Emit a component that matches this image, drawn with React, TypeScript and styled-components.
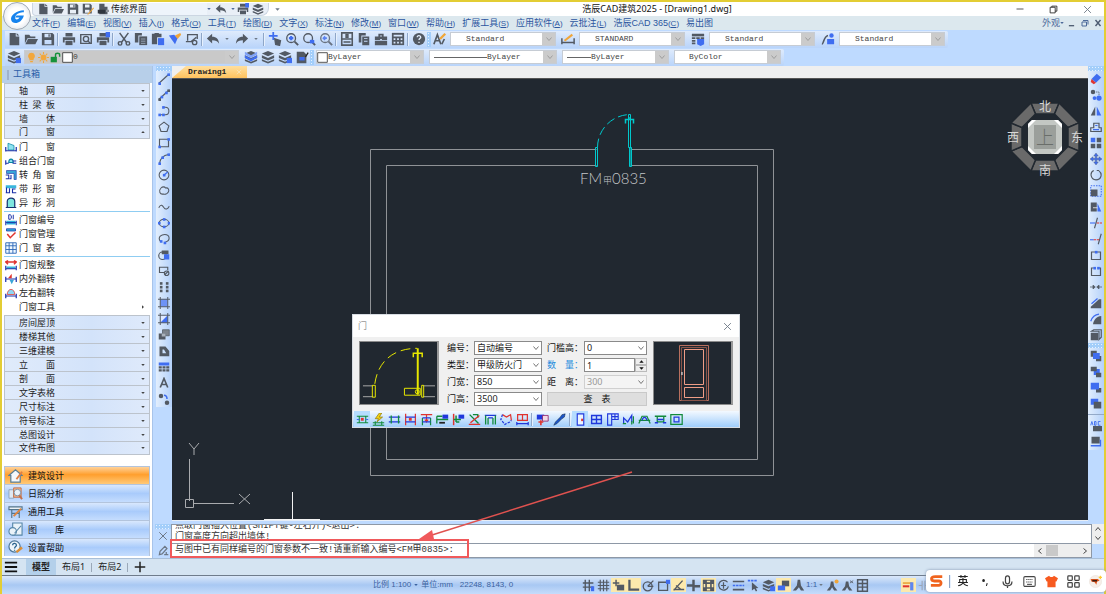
import React from "react";
import styled, { createGlobalStyle, css } from "styled-components";

const DARK = "#525963";
const BLUE = "#3f6df0";
const NAVY = "#1a2fa8";
const CYAN = "#00c8cc";
const GREEN = "#128a3c";
const RED = "#e0342f";
const YEL = "#f0a63a";

const GlobalStyle = createGlobalStyle`
  * { box-sizing: border-box; }
  body { margin: 0; background: #bedaff; }
  body, button, input, select {
    font-family: "Noto Sans", "Noto Sans CJK SC", sans-serif;
    font-size: 9px;
    line-height: 12px;
  }
  button { border: 0; padding: 0; background: none; color: inherit; }
`;

/* ---------- icon set, drawn on a 16 unit grid ---------- */

const layers = (
  <g fill={DARK}>
    <path d="M8 1l7 3-7 3-7-3z" />
    <path d="M1 6l7 3 7-3v3l-7 3-7-3z" />
    <path d="M1 10.500l7 3 7-3v2l-7 3-7-3z" />
  </g>
);
const printer = (
  <g fill={DARK}>
    <path d="M4 1h8v4H4zM1 6h14v6h-2V9H3v3H1z" />
    <path d="M4 10h8v5H4z" />
  </g>
);
const undo = <path d="M7 2v3.500c5 0 7.500 3 8 8-2-3-4-4-8-4V13L1 7.500z" fill={DARK} />;
const magnifier = (
  <g fill="none" stroke={DARK} strokeWidth="1.500">
    <circle cx="7" cy="7" r="5" />
    <path d="M11 11l4 4" strokeWidth="2.200" />
  </g>
);
const tri = (
  <g fill="none" stroke={DARK}>
    <path d="M1 14L14 2" strokeWidth="1.500" />
  </g>
);
const dot = (x: number, y: number, c = BLUE) => <rect x={x - 1.5} y={y - 1.5} width="3.500" height="3.500" fill={c} />;

const icons: Record<string, React.ReactNode> = {
  file: <path d="M3 1h7v4h4v10H3zM11 1l3 3h-3z" fill={DARK} />,
  folder: <path d="M1 3h5l1.500 2H13v2H4l-3 6zM4.500 8H16l-3 6H1.500z" fill={DARK} />,
  save: <path fillRule="evenodd" d="M1 1h12l2 2v12H1zM4 2v4h7V2zM4 9v5h8V9zM8.500 2.500h1.500v3H8.500z" fill={DARK} />,
  saveAs: (
    <g>
      <path fillRule="evenodd" d="M1 1h10l2 2v11H1zM4 2v4h6V2zM4 9v4h6V9z" fill={DARK} />
      <path d="M15 6l-7 8-1 2 2-1 7-8z" fill={YEL} />
    </g>
  ),
  dwg: (
    <g>
      <path d="M3 1h7v4h4v10H3z" fill={DARK} />
      <path d="M1 9h10v5H1z" fill="#30363e" />
      <path d="M12 9h4v3h-4z" fill="#8d9299" />
    </g>
  ),
  printer,
  printBlue: (
    <g>
      {printer}
      <path d="M11 0h5v6h-5z" fill={BLUE} />
    </g>
  ),
  preview: (
    <g fill="none" stroke={DARK} strokeWidth="1.600">
      <path d="M2 3h12v10H2z" />
      <circle cx="8" cy="8" r="3" />
      <path d="M10 10l3 3" />
    </g>
  ),
  cut: (
    <g fill="none" stroke={DARK} strokeWidth="1.700">
      <path d="M3 1l8 11M13 1L5 12" />
      <circle cx="3.500" cy="13" r="2" />
      <circle cx="12.500" cy="13" r="2" />
    </g>
  ),
  copy: (
    <g fill={DARK}>
      <path d="M1 1h8v3H5v8H1z" />
      <path d="M6 5h9v10H6z" />
      <path d="M8 8h5M8 10.500h5M8 13h5" stroke="#cfe0f5" strokeWidth="0.600" />
    </g>
  ),
  paste: (
    <g>
      <path d="M1 2h3V1h5v1h3v4H7v8H1z" fill={DARK} />
      <path d="M8 7h7v8H8z" fill={BLUE} />
    </g>
  ),
  brush: (
    <g>
      <path d="M1 4l6-1 4 4-3 7z" fill={BLUE} />
      <path d="M8 4l6-3 1 2-4 5z" fill={YEL} />
    </g>
  ),
  edit: (
    <g fill="none" stroke={DARK} strokeWidth="1.500">
      <path d="M3 10V3h11v5M1 11h8" />
      <circle cx="11" cy="12" r="2.500" />
      <path d="M7 11l6-5" />
    </g>
  ),
  undo,
  redo: <g transform="translate(16 0) scale(-1 1)">{undo}</g>,
  pan: (
    <g fill="none" stroke={BLUE} strokeWidth="2">
      <path d="M6 0v9M1 4.500h10" />
      <path d="M8 8l6 2-1 5-4-1z" fill={DARK} stroke={DARK} />
    </g>
  ),
  zoomIn: (
    <g>
      {magnifier}
      <path d="M4.500 7h5M7 4.500v5" stroke={BLUE} strokeWidth="2.400" />
    </g>
  ),
  zoomWin: (
    <g>
      {magnifier}
      <path d="M9 9h5v4H9z" fill={BLUE} />
    </g>
  ),
  zoomBack: (
    <g opacity="0.800">
      {magnifier}
      <path d="M9 7H5M7 5L5 7l2 2" stroke={BLUE} fill="none" strokeWidth="1.800" />
    </g>
  ),
  props: (
    <g fill="none" stroke={DARK} strokeWidth="1.800">
      <path d="M2 1h12v14H2zM2 8h12" />
      <path d="M4 11.500h8M7 3h2v3H7z" />
    </g>
  ),
  sheets: <path fillRule="evenodd" d="M2 1h8v3H5v8H2zM6 5h8v10H6zM8 7v1h4V7zM8 10v1h4v-1z" fill={DARK} />,
  toolbox: <path fillRule="evenodd" d="M5 2h6v3h4v4H9V8H7v1H1V5h4zM7 4v1h2V4zM1 10h14v5H1z" fill={DARK} />,
  calc: (
    <g>
      <path d="M1 1h14v14H1z" fill={DARK} />
      <path d="M3 3h10v2H3zM3 7h2v2H3zM7 7h2v2H7zM11 7h2v2h-2zM3 11h2v2H3zM7 11h2v2H7zM11 11h2v2h-2z" fill="#d6e5fa" />
    </g>
  ),
  help: (
    <g>
      <circle cx="8" cy="8" r="7" fill={DARK} />
      <path d="M6 6c0-3 4-2 4 0 0 1.500-2 1-2 3M8 11v1.500" stroke="#e3edfb" fill="none" strokeWidth="1.500" />
    </g>
  ),
  textStyle: (
    <g fill="none" strokeWidth="1.900">
      <path d="M1 14L5 3l4 11M3 10h5" stroke={DARK} />
      <path d="M10 14l3-6" stroke={DARK} />
      <path d="M8 8l6-6" stroke={YEL} strokeWidth="2.600" />
    </g>
  ),
  dimStyle: (
    <g fill="none" strokeWidth="1.700">
      <path d="M1 7v7M15 7v7M1 12h14" stroke={DARK} />
      <path d="M4 10l9-7" stroke={YEL} strokeWidth="2.400" />
    </g>
  ),
  tableStyle: (
    <g>
      <path d="M1 2h14v3H1z" fill={DARK} />
      <path d="M1 6h4v2H1zM6 6h4v2H6zM11 6h4v2h-4zM1 9h4v2H1zM1 12h4v2H1z" fill={DARK} />
      <path d="M7 8h8v6l-4 2-4-2z" fill={BLUE} />
    </g>
  ),
  leaderStyle: (
    <g>
      <path d="M1 14C3 14 3 5 8 4" stroke={DARK} strokeWidth="1.800" fill="none" />
      <circle cx="12" cy="4" r="2.500" fill={BLUE} />
      <path d="M7 8h8v6H7z" fill={BLUE} />
    </g>
  ),
  layers,
  layersBlue: (
    <g>
      {layers}
      <path d="M10 9h6v6h-6z" fill={BLUE} />
    </g>
  ),
  layersTop: (
    <g>
      {layers}
      <path d="M1 2l7 4 7-4v3l-7 4-7-4z" fill="#7fa2f8" />
      <path d="M1 6l7 4 7-4v3l-7 4-7-4z" fill={BLUE} />
    </g>
  ),
  layerPage: (
    <g>
      <path d="M2 2h8l3 3v10H2z" fill={DARK} />
      <path d="M5 8h6v4H5z" fill={BLUE} />
      <path d="M12 8l3-5" stroke="#222" strokeWidth="1.500" />
    </g>
  ),
  bulb: <path d="M8 1a5 5 0 0 1 3 9v2H5v-2a5 5 0 0 1 3-9zM6 13h4v2H6z" fill="#f2a73c" />,
  sun: (
    <g stroke="#f2a73c" strokeWidth="1.500">
      <circle cx="8" cy="8" r="3.500" fill="#f2a73c" />
      <path d="M8 0v3M8 13v3M0 8h3M13 8h3M2.500 2.500l2 2M11.500 11.500l2 2M13.500 2.500l-2 2M4.500 11.500l-2 2" />
    </g>
  ),
  lock: (
    <g>
      <path d="M1 7h9v8H1z" fill="#17923a" />
      <path d="M8 8V4c0-3 6-3 6 0v3" fill="none" stroke="#17923a" strokeWidth="2" />
    </g>
  ),
  swatch: <path d="M1 1h14v14H1z" fill="#fff" stroke="#333" strokeWidth="1.200" />,

  line: <g>{tri}{dot(2, 14)}{dot(14, 2)}</g>,
  xline: <g>{tri}{dot(2, 14, DARK)}{dot(14, 2, DARK)}{dot(5, 10.5)}{dot(11, 5)}</g>,
  pline: (
    <g>
      <path d="M2 13h8M7 3h3c6 0 6 10 0 10" fill="none" stroke={DARK} strokeWidth="1.400" />
      {dot(2, 13)}{dot(7, 13)}{dot(7, 3)}
    </g>
  ),
  polygon: <path d="M8 1.500l6.500 5L12 14H4L1.500 6.500z" fill="none" stroke={DARK} strokeWidth="1.500" />,
  rect: <g><path d="M2 3h12v10H2z" fill="none" stroke={DARK} strokeWidth="1.500" />{dot(14, 3)}{dot(2, 13)}</g>,
  arc: <g><path d="M2 14C3 7 7 3 14 2" fill="none" stroke={DARK} strokeWidth="1.400" />{dot(2, 14)}{dot(6, 6)}{dot(14, 2)}</g>,
  circle: <g><circle cx="8" cy="8" r="6.500" fill="none" stroke={DARK} strokeWidth="1.400" /><path d="M8 8l5-4" stroke={BLUE} strokeWidth="1.500" />{dot(8, 8)}</g>,
  cloud: <path d="M4 4c2-2 5-2 6 0 4-1 5 3 4 5s-4 4-7 3c-4 1-7-4-3-8z" fill="none" stroke={DARK} strokeWidth="1.400" />,
  spline: <path d="M1 9c3-6 5-3 7 0s5 2 7-2" fill="none" stroke={DARK} strokeWidth="1.400" />,
  ellipse: <g><ellipse cx="8" cy="8" rx="6.500" ry="5" fill="none" stroke={DARK} strokeWidth="1.400" />{dot(8, 3)}{dot(8, 13)}{dot(1.500, 8)}{dot(14.500, 8)}</g>,
  ellArc: <g><path d="M3 11C-1 5 5 2 9 2c7 0 8 8 1 10" fill="none" stroke={DARK} strokeWidth="1.400" />{dot(4, 11)}{dot(9, 13)}</g>,
  block: <g><circle cx="6" cy="9" r="5" fill="none" stroke={DARK} strokeWidth="1.500" /><path d="M5 2h9v5H5z" fill={DARK} /><path d="M8 7h7v7H8z" fill={BLUE} /></g>,
  mkblock: <g fill="none" stroke={DARK} strokeWidth="1.500"><path d="M8 10H2V3h11v4" /><circle cx="11.500" cy="11" r="3" /><path d="M9 13l5-5" /></g>,
  points: <g>{dot(4, 3, DARK)}{dot(4, 8, DARK)}{dot(4, 13, DARK)}{dot(12, 3, DARK)}{dot(12, 8, DARK)}{dot(12, 13, DARK)}</g>,
  hatch: <g><path d="M3 3h10v10H3z" fill="#6d92f5" /><path d="M3 0v16M13 0v16M0 3h16M0 13h16" stroke={DARK} strokeWidth="1.300" /></g>,
  gradient: <g><path d="M3 13V3h10z" fill="#dfe9ff" /><path d="M3 13L13 3v10z" fill={BLUE} /><path d="M3 0v16M13 0v16M0 3h16M0 13h16" stroke={DARK} strokeWidth="1.300" /></g>,
  boundary: <g><path d="M6 1h9v8H6z" fill="#7d848d" stroke={DARK} /><path d="M1 6h9v8H1z" fill={DARK} /><path d="M5 6h5v4H5z" fill="#aab2bc" /></g>,
  region: <path fillRule="evenodd" d="M2 2h8l5 6v7H2zM6 6v5h5L8 6z" fill={DARK} />,
  table: <g><path d="M1 2h14v4H1z" fill={BLUE} /><path d="M1 7h4v3H1zM6 7h4v3H6zM11 7h4v3h-4zM1 11h4v3H1zM6 11h4v3H6zM11 11h4v3h-4z" fill={DARK} /></g>,
  text: <path d="M3 14L8 2l5 12M5 10h6" fill="none" stroke={DARK} strokeWidth="2.200" />,
  match: <g><circle cx="4" cy="4" r="3" fill={DARK} /><circle cx="12" cy="13" r="3" fill={DARK} /><path d="M8 3c3 0 4 2 4 5" fill="none" stroke={BLUE} strokeWidth="2" /></g>,

  eraser: <g><path d="M9 1l6 5-7 7-6-5z" fill={BLUE} /><path d="M2 8l6 5-3 2-4-3z" fill={RED} /></g>,
  copyObj: <g><circle cx="4" cy="4" r="3" fill={DARK} /><path d="M8 4h4v4" fill="none" stroke={DARK} strokeDasharray="2 1" /><circle cx="6" cy="12" r="2.500" fill={BLUE} /><circle cx="12" cy="12" r="3.500" fill={BLUE} /></g>,
  mirror: <g><path d="M7 2v12H1z" fill={DARK} /><path d="M9 2v12h6z" fill={BLUE} /></g>,
  offset: <g fill="none" strokeWidth="1.600"><path d="M1 14h14V9h-3V3H5v6H1z" stroke={DARK} /><path d="M4 11.500h8M7 6h3" stroke={BLUE} /></g>,
  array: <g><path d="M1 1h6v6H1z" fill={BLUE} /><path d="M9 1h6v6H9zM1 9h6v6H1zM9 9h6v6H9z" fill={DARK} /></g>,
  move: <path d="M8 0l3 4H9v3h3V5l4 3-4 3V9H9v3h2l-3 4-3-4h2V9H4v2L0 8l4-3v2h3V4H5z" fill={BLUE} stroke={DARK} strokeWidth="0.500" />,
  rotate: <path d="M5 2C-1 5 1 14 8 14.500c7 0 9-8 4-12M12 2h-3" fill="none" stroke={DARK} strokeWidth="1.500" />,
  scale: <g><path d="M1 1h14v14H1z" fill="none" stroke={BLUE} strokeDasharray="2 1.500" strokeWidth="1.400" /><path d="M1 6h9v9H1z" fill={DARK} /></g>,
  stretch: <g><path d="M1 2h8v12H1z" fill={DARK} /><path d="M10 3l5 11h-5z" fill={BLUE} /><path d="M4 9h6" stroke="#fff" /></g>,
  trim: <g strokeWidth="1.500"><path d="M10 1L6 15" stroke={DARK} /><path d="M0 8h7" stroke={BLUE} /><path d="M9 8h7" stroke={RED} strokeDasharray="3 1" /></g>,
  extend: <g strokeWidth="1.500"><path d="M15 1l-4 14" stroke={DARK} /><path d="M0 9h5" stroke={BLUE} /><path d="M5 9h7" stroke={RED} strokeDasharray="3 1" /></g>,
  breakPt: <g><path d="M2 4h12v10H2z" fill="none" stroke={DARK} strokeWidth="1.600" />{dot(8, 4)}</g>,
  breakTwo: <g><path d="M5 4H2v10h12V4h-3" fill="none" stroke={DARK} strokeWidth="1.600" />{dot(6, 4)}{dot(11, 4)}</g>,
  join: <path d="M0 8h5M16 8h-5M4 5.500L7 8l-3 2.500zM12 5.500L9 8l3 2.500z" fill={DARK} stroke={DARK} />,
  chamfer: <g><path d="M15 3v12H1v-2L12 3z" fill={DARK} /><path d="M2 9l8-7" stroke={BLUE} strokeWidth="1.700" /></g>,
  fillet: <g><path d="M15 4c-6 0-10 5-11 11h11z" fill={DARK} /><path d="M1 11C3 5 7 2 12 1.500" stroke={BLUE} strokeWidth="1.700" fill="none" /></g>,
  explode: <g><path d="M1 5h10v10H1z" fill={DARK} /><path d="M2 3l3-2h10v10l-3 3V3z" fill="none" stroke={DARK} strokeWidth="1.600" /></g>,
  front: <g><path d="M1 1h8v8H1zM8 8h7v7H8z" fill={DARK} /><path d="M4 4h9v8H4z" fill={BLUE} /></g>,
  back: <g><path d="M5 4h8v8H5z" fill={BLUE} /><path d="M1 1h8v6H1zM8 9h7v6H8z" fill={DARK} /></g>,
  above: <g><path d="M8 8h7v6H8z" fill={DARK} /><path d="M1 1h11v9H1z" fill={BLUE} /></g>,
  under: <g><path d="M1 1h10v8H1z" fill={BLUE} /><path d="M5 5h10v9H5z" fill={DARK} /></g>,
  abc: <g><path d="M4 8h12v7H4z" fill={DARK} /><path d="M1 7l1.500-5L4 7M6 2v5h2V2zM14 2h-3v5h3" fill="none" stroke={BLUE} strokeWidth="1.200" /></g>,
  dimFront: <g><path d="M2 1h11v9H2z" fill={DARK} /><path d="M1 13h13M14 5v9" stroke={BLUE} strokeWidth="1.800" fill="none" /></g>,

  pWindow: <g><path d="M4 12V3l8 3v6z" fill="#8fe3f0" stroke="#0a86a6" /><path d="M1 8v6M15 8v6M1 13h14" stroke={NAVY} strokeWidth="1.600" /></g>,
  pCombo: <g fill="none" strokeWidth="1.500"><path d="M5 10c0-6 6-6 6 0z" stroke="#0a86a6" fill="#8fe3f0" /><path d="M1 7v6M1 11h4M10 8h5M10 11h5" stroke={NAVY} /></g>,
  pCorner: <g><path d="M2 2h13v12h-3V6H2z" fill="#39a5d8" stroke={NAVY} strokeWidth="0.800" /><path d="M1 8h4v5H1M8 8v5H6" fill="none" stroke={NAVY} strokeWidth="1.400" /></g>,
  pStrip: <g><path d="M1 3h14v4H1z" fill="#39b6dc" /><path d="M2 6v7M6 7v6H1M14 8h-4v5h5" fill="none" stroke={NAVY} strokeWidth="1.500" /></g>,
  pShape: <path d="M3 14V6c0-6 10-6 10 0v8zM1 14h14" fill="#7fe6df" stroke="#14306e" strokeWidth="1.600" />,
  pNumber: <g><path d="M2 9h12v5H2z" fill="#2fb2dd" /><path d="M5 1v6h2c2 0 2-6 0-6zM11 1v6M1 9v6M15 9v6M1 11.500h14" stroke={NAVY} fill="none" strokeWidth="1.300" /></g>,
  pManage: <g><path d="M2 1h12v3H2z" fill="#2fb2dd" stroke={NAVY} /><path d="M3 8l4 5 7-7" fill="none" stroke={RED} strokeWidth="2" /></g>,
  pTable: <path d="M1 1h14v14H1zM1 5h14M1 10h14M5.500 1v14M10.500 1v14" fill="#eef8ff" stroke="#2b66b8" strokeWidth="1.200" />,
  pAlign: <g><path d="M2 4h12M4 2L1 4l3 3M12 2l3 2-3 3" stroke={RED} fill="none" strokeWidth="2" /><path d="M2 10h12v3H2z" fill="#39b6dc" /><path d="M1 9v6M15 9v6M1 13h14" stroke={NAVY} strokeWidth="1.500" /></g>,
  pFlipIn: <g><path d="M1 5v7M15 5v7M1 8h14" stroke={NAVY} strokeWidth="1.600" /><path d="M4 7l5-6v6z" fill={RED} /><path d="M6 9h6l-3 6z" fill="#39a5d8" /></g>,
  pFlipLr: <g><path d="M3 10c0-9 10-9 10 0z" fill="#8fd6f2" stroke={RED} /><path d="M1 9v6M15 9v6M1 12h14" stroke={NAVY} strokeWidth="1.600" /></g>,

  bHouse: <g><path d="M1 8l7-6 7 6h-2v7H3V8z" fill="#f4f8fb" stroke="#5b7f96" strokeWidth="1.300" /><path d="M9 12l6-8" stroke="#e07f43" strokeWidth="2" /></g>,
  bSun: <g><path d="M1 4h5v9H1z" fill="#dfe8f2" stroke="#8fa5bd" /><path d="M6 2h8v10H6z" fill="#f2b48c" stroke="#c2714a" /><circle cx="10" cy="7" r="3.500" fill="#e8f1f8" stroke="#7791a8" /><path d="M12 10l3 4" stroke="#c2714a" strokeWidth="2" /></g>,
  bTools: <g><path d="M1 3h14v3H1zM4 6v9M12 6v9M4 10h8" fill="#eaf1f6" stroke="#54758c" strokeWidth="1.200" /><path d="M6 13l8-8" stroke="#e0853f" strokeWidth="2" /></g>,
  bLib: <g fill="#eaf3f9" stroke="#5686a8" strokeWidth="1.200"><path d="M5 1h10v13H5z" /><circle cx="5" cy="10" r="4" /><path d="M7 12l7-8" /></g>,
  bHelp: <g><circle cx="7" cy="7" r="6" fill="#edf5fb" stroke="#4e7797" strokeWidth="1.300" /><path d="M5 5.500c0-3 4-2 4 0C9 7 7 7 7 9M7 10.500v1" stroke="#28628e" fill="none" strokeWidth="1.400" /><path d="M9 13l6-5" stroke="#dd8f35" strokeWidth="2.600" /></g>,

  dCenter: <g strokeWidth="1.300" fill="none"><path d="M1 4h14M1 12h14M4 4v8M12 4v8" stroke={GREEN} /><path d="M1 8h3M12 8h3" stroke={BLUE} />{dot(7.5, 7.5, RED)}</g>,
  dFlash: <g><path d="M9 0L4 7h4l-2 4 7-6H9l3-5z" fill="#f5d211" stroke="#857000" strokeWidth="0.800" /><path d="M1 12h14M1 15h14M4 10v5M12 10v5" stroke={GREEN} strokeWidth="1.300" /></g>,
  dWall: <g fill="none" strokeWidth="1.600"><path d="M1 5h14M1 11h14" stroke="#2038dc" /><path d="M4 3v10M13 3v10" stroke={GREEN} /></g>,
  dLimit: <g fill="none" strokeWidth="1.500"><path d="M2 1v14M14 1v14" stroke={RED} /><path d="M2 5h12M2 11h12" stroke="#2038dc" />{dot(7.5, 7.5, RED)}</g>,
  dTop: <g fill="none" strokeWidth="1.500"><path d="M1 2h14M8 2v9M6 8l2 3 2-3" stroke={RED} /><path d="M3 6v9M13 6v9" stroke={GREEN} /><path d="M3 6h10M3 11h10" stroke="#2038dc" /></g>,
  dAxis: <g fill="none" strokeWidth="1.600"><path d="M1 4h7M1 4v9M1 8h14" stroke={GREEN} /><path d="M8 2h7v5H8z" fill="#2038dc" stroke="none" /><path d="M4 12h7" stroke="#222" strokeWidth="2.200" /></g>,
  dPad: <g fill="none" strokeWidth="1.800"><path d="M2 1v14" stroke={RED} /><path d="M2 8h9M5 3v8M5 11h4" stroke={GREEN} /><path d="M8 2h7v5H8z" fill="#2038dc" /></g>,
  dAngle: <g fill="none" strokeWidth="1.700"><path d="M2 2l11 11M6 2h6v4" stroke={GREEN} /><path d="M1 14h14M3 12L14 3" stroke={RED} /></g>,
  dDoor: <g fill="none" strokeWidth="1.600"><path d="M1 3h14M5 6h6" stroke="#2038dc" /><path d="M2 3v11M14 3v11M5 6v8M11 6v8" stroke={GREEN} /></g>,
  dPoly: <g fill="none" strokeWidth="1.500"><path d="M3 2l5 3 5-3 1 7" stroke={RED} /><path d="M3 2L1 8l5 6 6-3 2-2" stroke="#2038dc" strokeDasharray="3 1.500" /></g>,
  dPair: <g fill="none" strokeWidth="1.500"><path d="M2 2h12v7H2zM8 2v7" stroke={RED} /><path d="M1 13h14M1 11v4M15 11v4" stroke="#2038dc" /></g>,
  dReplace: <g><path d="M1 2h9v6H1z" fill="#2038dc" /><path d="M8 3h7v7H8z" fill="#f2d8e6" stroke="#8c1e66" /><path d="M3 11h6M6 9v6" stroke={RED} strokeWidth="2" /></g>,
  dPick: <path d="M1 15l2-4 6-6 2-3 4-1-1 4-3 2-6 6z" fill="#1c55c8" stroke="#123" strokeWidth="0.600" />,
  dLeaf: <g fill="none" strokeWidth="1.400"><path d="M4 1h8v14H4z" stroke="#2038dc" fill="#eaf4ff" /><path d="M10 7v3" stroke={RED} strokeWidth="2.400" /></g>,
  dWin: <path d="M2 3h12v10H2zM8 3v10M2 8h12" fill="none" stroke="#2038dc" strokeWidth="1.700" />,
  dDoorWin: <path d="M2 1h5v14H2zM7 1h8v7H7zM11 1v7M7 4.500h8" fill="none" stroke="#2038dc" strokeWidth="1.400" />,
  dFold: <g fill="none" strokeWidth="1.500"><path d="M2 13V6l5 5 5-8v8" stroke="#2038dc" /><path d="M1 13h4M12 10v4M14 4v9" stroke={GREEN} /></g>,
  dArch: <g fill="none" strokeWidth="1.500"><path d="M1 13l4-9h6l4 9M1 9h14" stroke={GREEN} /><path d="M5 9c1-5 5-5 6 0" stroke="#2038dc" /></g>,
  dBay: <g fill="none" strokeWidth="1.600"><path d="M1 4h14M4 4v7h8V4" stroke={GREEN} /><path d="M4 8h8M1 12h4M11 12h4" stroke="#2038dc" /></g>,
  dHole: <g fill="none" strokeWidth="1.500"><path d="M1 2h14v12H1z" stroke={GREEN} /><path d="M5 5h6v6H5z" stroke="#2038dc" /></g>,

  snap: <g><path d="M4 1v14M9 1v14M1 5h13M1 10h13" stroke={DARK} strokeWidth="1.700" /><path d="M11 9h4v6h-4z" fill={BLUE} /></g>,
  grid: <path d="M4 1v14M8 1v14M12 1v14M1 4h14M1 8h14M1 12h14" stroke={DARK} strokeWidth="1.400" />,
  dynIn: <g><path d="M1 5h8M5 1v8" stroke={DARK} strokeWidth="1.800" /><path d="M6 7h9v7H6z" fill={DARK} /></g>,
  ortho: <path d="M3 1v12h12" fill="none" stroke={DARK} strokeWidth="2.800" />,
  polar: <g fill="none" stroke={DARK} strokeWidth="1.600"><circle cx="7" cy="9" r="5.500" /><path d="M7 9l7-7M7 9h7" /></g>,
  osnap: <g><path d="M2 4h11v10H2z" fill="none" stroke={DARK} strokeWidth="1.600" /><path d="M11 1h5v5h-5z" fill={BLUE} /></g>,
  track: <path d="M2 14L13 2M2 13h13M5 8l6 5" fill="none" stroke={DARK} strokeWidth="1.700" />,
  lwt: <path d="M0 8h8M8 1v14M8 9h8" fill="none" stroke={DARK} strokeWidth="3" />,
  dynUcs: <path fillRule="evenodd" d="M1 1h14v14H1zM6 2v2h4V2zM2 6v4h2V6zM12 6v4h2V6zM6 12v2h4v-2zM6 6v4h4V6z" fill={DARK} />,
  cycle: <path d="M13 4A6 6 0 1 0 14 9M8 4v8M5 8h6" fill="none" stroke={DARK} strokeWidth="1.500" />,
  lines: <g strokeWidth="2"><path d="M1 3h14M1 13h14" stroke={DARK} /><path d="M1 8h14" stroke={BLUE} strokeDasharray="3 1" /></g>,
  cursor: <g><path d="M1 2h12" stroke={BLUE} strokeDasharray="3 1" strokeWidth="2" /><path d="M6 4l8 7-3 .5 1.500 3-1.500 1-2-3.500-3 2z" fill={DARK} /></g>,
  screens: <g><path d="M6 2h9v7H6z" fill={DARK} /><path d="M1 8h9v6H1z" fill={BLUE} /></g>,
  anno: <path d="M7 1h3l1 7 4 6h-4l-2.500-4L5 14H1l5-6z" fill={DARK} />,
  annoDot: <g><path d="M6 3h3l1 6 4 5h-4l-2.500-4L5 14H1l4-5z" fill={DARK} /><circle cx="13" cy="3" r="2.500" fill={YEL} /></g>,
  annoX: <g><path d="M6 3h3l1 6 4 5h-4l-2.500-4L5 14H1l4-5z" fill={DARK} /><path d="M11 2l4 3M15 2l-4 3" stroke={DARK} /></g>,
  cabinet: <path d="M2 1h12v14H2zM8 1v14M2 5.500h12M2 10h12" fill="none" stroke={DARK} strokeWidth="1.800" />,
  tray: <g><path d="M1 5h11" stroke="#e7a53a" strokeWidth="2" /><path d="M1 9h8" stroke={RED} strokeWidth="2.500" /><path d="M10 4h4v10h-4z" fill="#5e86ee" /></g>,
  isolate: <path d="M6 1v14M10 1v14M1 8h5M10 8h5" stroke="#9aa5b5" strokeWidth="1.600" />,

  min: <path d="M1 8h14" stroke="#222" strokeWidth="1.500" />,
  max: <path d="M2 4h9v10H2zM5 4V2h9v9h-3" fill="none" stroke="#222" strokeWidth="1.500" />,
  close: <path d="M2 2l12 12M14 2L2 14" stroke="currentColor" strokeWidth="1.600" />,
  closeBold: <path d="M3 2l10 12M13 2L3 14" stroke="#4d5b70" strokeWidth="2.800" />,
  minBar: <path d="M2 13h12" stroke="#4d5b70" strokeWidth="3" />,
  restore: <path d="M2 6h9v8H2zM4 3h10v8" fill="none" stroke="#4d6a9a" strokeWidth="2" />,
  pencil: <path d="M2 14l1-5 7-7 3 3-7 8zM9 14h6M12 10v5" fill="none" stroke="#6d7886" strokeWidth="1.800" />,
  plus: <path d="M8 1v14M1 8h14" stroke="#222" strokeWidth="2" />,
  burger: <path d="M1 3h14M1 8h14M1 13h14" stroke="#111" strokeWidth="2.200" />,
  chevron: <path d="M3 5l5 6 5-6" fill="none" stroke="currentColor" strokeWidth="1.800" />,
  caret: <path d="M1 4h14l-7 8z" fill="currentColor" />,
  logo: <path d="M14 2C7 2 1 7 2 11c1 5 10 4 12-4H7l-1 2h4c-2 3-5 2-4-1s5-4 8-4z" fill="#1683ee" />,
  sogou: <path d="M14 3H6C0 3 1 8 5 8h5c4 0 3 5 0 5H1" fill="none" stroke="#f0641e" strokeWidth="3.200" />,
  mic: <g fill="none" stroke="#444" strokeWidth="1.500"><path d="M5.500 4c0-4 5-4 5 0v4c0 4-5 4-5 0z" /><path d="M2.500 8c0 7 11 7 11 0M8 13v3" /></g>,
  keyboard: <g fill="none" stroke="#444" strokeWidth="1.300"><rect x="1" y="2" width="14" height="12" rx="1.500" /><path d="M4 5.500h8M4 8.500h8" strokeDasharray="1.500 1" /><path d="M5 11.500h6" /></g>,
  shirt: <path d="M5 1c1 2 5 2 6 0l5 3-2 4h-1v7H3V8H2L0 4z" fill="#f75a20" />,
  apps: <g fill="none" stroke="#444" strokeWidth="1.500"><rect x="1" y="1" width="5.500" height="5.500" rx="1" /><rect x="9.500" y="1" width="5.500" height="5.500" rx="1" /><rect x="1" y="9.500" width="5.500" height="5.500" rx="1" /><rect x="9.500" y="9.500" width="5.500" height="5.500" rx="1" /></g>,
  fox: <g><circle cx="8" cy="8" r="7.500" fill="#f7efe9" stroke="#e6dcd4" strokeWidth="0.600" /><path d="M2 5l9 0 2 2-3 1-1 4-2-3-4-1z" fill="#e2561c" /><path d="M4 6h6v2H4z" fill="#3b1d14" /><path d="M14 1v4M12 3h4" stroke="#ffcc33" strokeWidth="1.500" /></g>,
};

const Icon = ({ name, size = 14 }: { name: string; size?: number }) => (
  <svg width={size} height={size} viewBox="0 0 16 16" aria-hidden="true" style={{ flexShrink: 0, display: "block" }}>
    {icons[name]}
  </svg>
);

/* ---------- shared parts ---------- */

const center = css`
  display: flex;
  align-items: center;
  justify-content: center;
`;

const ToolButton = styled.button<{ $w?: number; $h?: number; $on?: boolean }>`
  ${center}
  flex: none;
  width: ${(p) => p.$w ?? 17}px;
  height: ${(p) => p.$h ?? 16}px;
  color: #6d7886;
  background: ${(p) => (p.$on ? "#fce9ad" : "none")};
`;
const Divider = styled.span<{ $h?: number }>`
  flex: none;
  width: 2px;
  height: ${(p) => p.$h ?? 13}px;
  margin: 0 1px;
  border-left: 1px solid #8ea6c8;
  border-right: 1px solid #e6f0fd;
`;
const Grip = styled.span<{ $wide?: boolean }>`
  flex: none;
  width: ${(p) => (p.$wide ? "100%" : "4px")};
  height: ${(p) => (p.$wide ? 5 : 15)}px;
  background: radial-gradient(circle, #e8f3ff 1px, transparent 1px) 0 0 / 3px 3px #a3cefa;
`;

/* ---------- window frame ---------- */

const Window = styled.div`
  min-height: 100vh;
  display: flex;
  flex-direction: column;
  border: solid #e3cd34;
  border-width: 2px 2px 0;
  background: #bedaff;
`;
const Header = styled.header`
  display: grid;
  grid-template-columns: 30px 1fr;
  background: linear-gradient(#fff 14px, #dce8ee 14px);
  height: 28px;
`;
const LogoButton = styled.button`
  ${center}
  grid-row: 1 / 3;
  align-self: center;
  justify-self: center;
  width: 28px;
  height: 28px;
  border-radius: 50%;
  border: 1px solid #9fa8b3;
  background: radial-gradient(circle, #fff 45%, #d3d9e2);
`;
const TitleRow = styled.div`
  display: flex;
  align-items: center;
  height: 14px;
`;
const QuickBar = styled.div`
  display: flex;
  align-items: center;
  height: 13px;
  color: #4d6a9a;
`;
const QuickPill = styled.div`
  display: flex;
  align-items: center;
  height: 13px;
  padding-left: 2px;
  padding-right: 3px;
  border-radius: 0 0 8px 4px;
  border: 1px solid #ccd6e2;
  border-top: 0;
  background: #e9eff7;
`;
const Workspace = styled.select`
  width: 97px;
  height: 12px;
  appearance: none;
  border: 0;
  padding: 0 1px;
  line-height: 11px;
  color: #222;
  background: #eef4fb;
`;
const Title = styled.h1`
  flex: 1;
  margin: 0;
  padding-left: 18px;
  font-size: 9px;
  line-height: 12px;
  font-weight: 400;
  text-align: center;
  color: #111;
`;
const WindowControls = styled.div`
  display: flex;
  gap: 17px;
  padding-right: 8px;
  color: #222;
`;
const MenuRow = styled.nav`
  display: flex;
  align-items: center;
  height: 14px;
  color: #2c56a0;
`;
const MenuItem = styled.button`
  padding-right: 7px;
  font-family: "Liberation Sans", "Noto Sans CJK SC", sans-serif;
  white-space: nowrap;
`;
const AccessKey = styled.span`
  font-size: 8px;
  u { text-underline-offset: 1px; }
`;
const MenuRight = styled.div`
  display: flex;
  align-items: center;
  margin-left: auto;
  color: #4d6a9a;
`;

const ToolRow = styled.div`
  display: flex;
  align-items: center;
  height: 18px;
  padding-left: 3px;
  background: #bedaff;
`;
const ToolGroup = styled.div`
  display: flex;
  align-items: center;
  height: 17px;
  border-radius: 0 2px 2px 0;
  background: linear-gradient(#dfebfc, #b9d4fa);
`;

const ComboWrap = styled.label<{ $w: number; $muted?: boolean }>`
  display: flex;
  align-items: center;
  flex: none;
  width: ${(p) => p.$w}px;
  height: 14px;
  margin: 0 3px 0 2px;
  border: 1px solid #c6ccd4;
  color: #8b8b8b;
  background: ${(p) => (p.$muted ? "#c9c9c9" : "#fff")};
`;
const ComboSelect = styled.select`
  flex: 1;
  min-width: 0;
  height: 12px;
  appearance: none;
  border: 0;
  padding: 0;
  background: none;
  font-family: "Liberation Mono", monospace;
  font-size: 8px;
  line-height: 12px;
  color: #444;
`;
const ComboArrow = styled.span`
  ${center}
  width: 13px;
  height: 12px;
  color: #999;
  background: #cbcbcb;
`;
const ComboRule = styled.span<{ $w: number }>`
  width: ${(p) => p.$w}px;
  height: 1px;
  margin-left: 4px;
  background: #666;
`;
const ComboPad = styled.span<{ $w: number }>`
  width: ${(p) => p.$w}px;
`;

const Combo = ({ label, value, w, lead, muted }: { label: string; value: string; w: number; lead?: React.ReactNode; muted?: boolean }) => (
  <ComboWrap $w={w} $muted={muted}>
    {lead}
    <ComboSelect aria-label={label} defaultValue={value}>
      <option>{value}</option>
    </ComboSelect>
    <ComboArrow>
      <Icon name="chevron" size={8} />
    </ComboArrow>
  </ComboWrap>
);

/* ---------- body ---------- */

const Body = styled.div`
  flex: 1;
  display: flex;
`;
const Palette = styled.aside`
  flex: none;
  display: flex;
  flex-direction: column;
  width: 151px;
  padding-left: 2px;
  background: #fff;
  border-right: 1px solid #a8c4ea;
`;
const PaletteHead = styled.h2`
  margin: 0 0 0 -2px;
  padding-left: 5px;
  height: 17px;
  font-size: 9px;
  line-height: 16px;
  font-weight: 400;
  color: #2c5ea8;
  background: #b7cfe9;
  &::before {
    content: "";
    display: inline-block;
    width: 2px;
    height: 10px;
    margin-right: 4px;
    vertical-align: middle;
    background: #9fb2cc;
  }
`;
const Category = styled.button`
  display: flex;
  align-items: center;
  width: 146px;
  height: 14px;
  padding: 0 4px 0 14px;
  border: 1px solid #bcc3cc;
  border-bottom: 0;
  color: #1d1d1d;
  background: linear-gradient(90deg, #e0ebfb, #d3e3fa 60%, #dfeafb);
  &:last-child { border-bottom: 1px solid #bcc3cc; }
`;
const Caption = styled.span`
  width: 36px;
  white-space: nowrap;
  text-align-last: justify;
`;
const CategoryMark = styled.span`
  display: flex;
  margin-left: auto;
  color: #444;
`;
const ToolList = styled.div`
  display: flex;
  flex-direction: column;
  width: 146px;
  padding: 1px 0;
  & + & { border-top: 1px solid #8fcdf2; }
`;
const ToolEntry = styled.button`
  display: flex;
  align-items: center;
  gap: 2px;
  height: 14px;
  padding: 0 5px 0 1px;
  color: #1d1d1d;
`;
const Blank = styled.span`
  width: 12px;
`;
const Stack = styled.div`
  display: flex;
  flex-direction: column;
`;
const Modules = styled.div`
  display: flex;
  flex-direction: column;
  margin-top: auto;
  padding-bottom: 2px;
`;
const ModuleButton = styled.button<{ $on?: boolean }>`
  display: flex;
  align-items: center;
  gap: 5px;
  width: 146px;
  height: 18px;
  padding-left: 3px;
  border: 1px solid #b3c4dc;
  border-bottom: 0;
  color: #111;
  background: ${(p) =>
    p.$on ? "linear-gradient(#ffd29a, #ff9f2e 45%, #ffc978)" : "linear-gradient(#d9e8fd, #a9cbfb 50%, #c5ddfe)"};
`;

const Work = styled.div`
  position: relative;
  flex: 1;
  min-width: 0;
  display: flex;
  flex-direction: column;
`;
const WorkRow = styled.div`
  flex: 1;
  display: flex;
`;
const SideBar = styled.div<{ $w: number }>`
  flex: none;
  width: ${(p) => p.$w}px;
  padding-left: ${(p) => p.$w - 16}px;
`;
const SideGroup = styled.div`
  display: flex;
  flex-direction: column;
  align-items: center;
  background: linear-gradient(90deg, #e2eefd, #b4d1fa);
`;
const SideRule = styled.span`
  width: 100%;
  height: 2px;
  margin: 2px 0;
  border-top: 1px solid #93a9c8;
`;
const Document = styled.main`
  flex: 1;
  min-width: 0;
  display: flex;
  flex-direction: column;
`;
const DocTabs = styled.div`
  display: flex;
  height: 13px;
  background: #efefef;
  border-bottom: 1px solid #555;
`;
const DocTab = styled.button`
  display: flex;
  align-items: center;
  gap: 10px;
  width: 75px;
  padding-left: 16px;
  clip-path: polygon(14px 0, 100% 0, 100% 100%, 0 100%);
  font-family: "Liberation Mono", monospace;
  font-size: 8px;
  font-weight: 700;
  color: #222;
  background: linear-gradient(#ffdf9e, #ffc25e);
  svg { color: #f7e9cc; }
`;
const Canvas = styled.div`
  position: relative;
  flex: 1;
  overflow: hidden;
  background: #212830;
  border-bottom: 1px solid #e8eef6;
`;
const Plan = styled.svg`
  position: absolute;
  left: 0;
  top: 0;
`;
const UcsMark = styled.svg`
  position: absolute;
  left: 0;
  bottom: 0;
`;
const Compass = styled.svg`
  position: absolute;
  right: 0;
  top: 12px;
`;

/* ---------- door dialog ---------- */

const Dialog = styled.section`
  position: absolute;
  left: 180px;
  top: 235px;
  width: 388px;
  border: 1px solid #d8dde3;
  background: #f0f0f0;
`;
const DialogHead = styled.header`
  display: flex;
  align-items: center;
  justify-content: space-between;
  height: 22px;
  padding: 0 5px;
  background: #fff;
  color: #999;
`;
const DialogBody = styled.div`
  display: flex;
  height: 74px;
  padding: 4px 6px 0;
`;
const Preview = styled.div`
  flex: none;
  ${center}
  width: 80px;
  height: 64px;
  border: 1px solid #8b8b8b;
  border-right: 2px solid #999;
  background: #212830;
`;
const FieldColumn = styled.div<{ $label: number }>`
  display: grid;
  grid-template-columns: ${(p) => p.$label}px 1fr;
  grid-auto-rows: 17px;
  flex: none;
  width: ${(p) => (p.$label === 27 ? 95 : 100)}px;
  margin-left: ${(p) => (p.$label === 27 ? 8 : 5)}px;
  color: #111;
`;
const FieldLabel = styled.label<{ $accent?: boolean }>`
  display: flex;
  justify-content: space-between;
  align-self: center;
  padding-right: 4px;
  padding-bottom: 3px;
  white-space: pre;
  color: ${(p) => (p.$accent ? "#1d8bdd" : "inherit")};
`;
const fieldBox = css`
  width: 100%;
  height: 14px;
  border: 1px solid #8a8a8a;
  border-radius: 0;
  padding: 0 2px;
  line-height: 12px;
  color: #222;
  background: #fff;
`;
const SelectCell = styled.span`
  display: grid;
  align-items: center;
  height: 14px;
  color: #666;
  > * { grid-area: 1 / 1; }
  > svg { justify-self: end; margin-right: 2px; pointer-events: none; }
`;
const FieldSelect = styled.select`
  ${fieldBox}
  appearance: none;
  &:disabled { border-color: #d0d0d0; color: #999; background: #f4f4f4; opacity: 1; }
`;
const FieldInput = styled.input`
  ${fieldBox}
  flex: 1;
  min-width: 0;
`;
const Spinner = styled.span`
  display: flex;
  height: 14px;
`;
const SpinButtons = styled.span`
  display: flex;
  flex-direction: column;
  width: 12px;
  button {
    ${center}
    height: 7px;
    border: 1px solid #bbb;
    background: #eee;
    color: #111;
  }
  button:first-child svg { transform: rotate(180deg); }
`;
const LookupButton = styled.button`
  grid-column: 1 / 3;
  height: 14px;
  border: 1px solid #c9c9c9;
  background: #dedede;
  color: #111;
  white-space: pre;
`;
const DialogTools = styled.div`
  display: flex;
  align-items: center;
  height: 16px;
  padding-left: 1px;
  background: linear-gradient(#f3f9ff, #9fcdfb);
`;
const DialogTool = styled(ToolButton)<{ $lit?: boolean }>`
  background: ${(p) => (p.$lit ? "#b5dcff" : "none")};
`;

/* ---------- command pane, tabs, status ---------- */

const CommandPane = styled.div`
  display: flex;
  height: 37px;
  padding-top: 3px;
`;
const CommandSide = styled.div`
  display: flex;
  flex-direction: column;
  align-items: center;
  flex: none;
  width: 18px;
  padding-left: 2px;
`;
const CommandMain = styled.div`
  flex: 1;
  min-width: 0;
  display: flex;
  flex-direction: column;
  border: 1px solid #8e98a6;
  background: #fff;
  font-family: "Liberation Mono", "Noto Sans CJK SC", monospace;
  color: #333;
`;
const History = styled.div`
  display: flex;
  flex-direction: column;
  justify-content: flex-end;
  height: 19px;
  overflow: hidden;
  padding-left: 3px;
  border-bottom: 1px solid #8e98a6;
  line-height: 11px;
  white-space: nowrap;
`;
const HistoryLine = styled.div`
  flex: none;
  height: 11px;
`;
const PromptRow = styled.div`
  display: flex;
  flex: 1;
`;
const PromptInput = styled.input`
  flex: 1;
  min-width: 0;
  height: 12px;
  border: 0;
  padding: 0 3px;
  font-family: inherit;
  color: inherit;
`;
const HScroll = styled.div`
  display: flex;
  align-items: center;
  width: 57px;
  background: #eee;
  color: #333;
`;
const HThumb = styled.span`
  width: 12px;
  height: 11px;
  margin-right: auto;
  background: #c9c9c9;
`;
const ScrollButton = styled.button<{ $turn: number }>`
  ${center}
  width: 12px;
  height: 9px;
  color: #333;
  svg { transform: rotate(${(p) => p.$turn}deg); }
`;
const VScroll = styled.div`
  width: 12px;
  height: 20px;
  background: #eee;
`;
const Callout = styled.div`
  position: absolute;
  left: 17px;
  bottom: 0;
  width: 299px;
  height: 19px;
  border: 2px solid #f0595b;
  pointer-events: none;
`;
const CalloutArrow = styled.svg`
  position: absolute;
  left: 257px;
  bottom: 16px;
  pointer-events: none;
`;

const LayoutTabs = styled.div`
  display: flex;
  align-items: center;
  height: 18px;
  padding-left: 2px;
  border-top: 1px solid #a9bfd8;
  border-bottom: 1px solid #6f7c8c;
  background: #d5e4f2;
  color: #222;
`;
const LayoutTab = styled.button<{ $on?: boolean }>`
  height: 16px;
  padding: 0 6px;
  font-weight: ${(p) => (p.$on ? 700 : 400)};
  background: ${(p) => (p.$on ? "#b4d0ea" : "none")};
`;
const LayoutRule = styled.span`
  width: 1px;
  height: 9px;
  background: #9aa8b8;
`;
const StatusBar = styled.footer`
  display: flex;
  align-items: center;
  height: 18px;
  padding-left: 371px;
  background: linear-gradient(#dbe8fa, #a8c8f3 50%, #c5dcfb);
  color: #3b62a0;
  font-family: "Liberation Sans", "Noto Sans CJK SC", sans-serif;
  font-size: 8px;
  white-space: pre;
`;
const StatusText = styled.span`
  display: flex;
  align-items: center;
  gap: 3px;
  width: 208px;
`;
const Coordinates = styled.span`
  margin-left: 4px;
`;
const StatusTray = styled.span`
  display: flex;
  margin-left: 31px;
`;
const ImeBar = styled.div`
  position: fixed;
  right: 0;
  bottom: 2px;
  display: flex;
  align-items: center;
  width: 180px;
  height: 22px;
  border-radius: 4px;
  background: #fff;
  box-shadow: 0 0 3px #7d91ad;
  color: #222;
  font-size: 11px;
`;
const ImeButton = styled.button`
  ${center}
  flex: 1;
  height: 20px;
  font-size: 11px;
  font-weight: 500;
`;

/* ---------- data ---------- */

const menus: [string, string][] = [
  ["文件", "F"], ["编辑", "E"], ["视图", "V"], ["插入", "I"], ["格式", "O"], ["工具", "T"], ["绘图", "D"], ["文字", "X"],
  ["标注", "N"], ["修改", "M"], ["窗口", "W"], ["帮助", "H"], ["扩展工具", "S"], ["应用软件", "A"], ["云批注", "L"],
  ["浩辰CAD 365", "C"], ["易出图", ""],
];
const mainTools = [
  "file folder save", "printer preview printBlue", "cut copy paste brush edit", "undo caret redo caret",
  "pan zoomIn zoomWin zoomBack", "props sheets toolbox calc", "help",
];
const drawTools = "line xline pline polygon rect arc circle cloud spline ellipse ellArc block mkblock points hatch gradient boundary region table text match".split(" ");
const modifyTools = "eraser copyObj mirror offset array move rotate scale stretch trim extend breakPt breakTwo join chamfer fillet explode".split(" ");
const orderTools = "front back above under".split(" ");
const topCategories = ["轴 网", "柱 梁 板", "墙 体", "门 窗"];
const toolGroups: [string, string][][] = [
  [["pWindow", "门 窗"], ["pCombo", "组合门窗"], ["pCorner", "转 角 窗"], ["pStrip", "带 形 窗"], ["pShape", "异 形 洞"]],
  [["pNumber", "门窗编号"], ["pManage", "门窗管理"], ["pTable", "门 窗 表"]],
  [["pAlign", "门窗规整"], ["pFlipIn", "内外翻转"], ["pFlipLr", "左右翻转"], ["", "门窗工具"]],
];
const lowerCategories = ["房间屋顶", "楼梯其他", "三维建模", "立 面", "剖 面", "文字表格", "尺寸标注", "符号标注", "总图设计", "文件布图"];
const modules: [string, string][] = [
  ["bHouse", "建筑设计"], ["bSun", "日照分析"], ["bTools", "通用工具"], ["bLib", "图 库"], ["bHelp", "设置帮助"],
];
const insertTools = "dCenter dFlash dWall dLimit dTop dAxis dPad dAngle dDoor dPoly dPair".split(" ");
const shapeTools = "dLeaf dWin dDoorWin dFold dArch dBay dHole".split(" ");
const statusTools = "snap grid dynIn* ortho* polar osnap track* lwt dynUcs* cycle lines cursor layersBlue screens* anno".split(" ");

/* ---------- drawings ---------- */

const segment = (i: number) => {
  const t = Math.tan(Math.PI / 8);
  const [o, n] = [34, 23];
  return (
    <path key={i} transform={`rotate(${i * 45})`} fill="#6a6a6a" stroke="#212830" strokeWidth="1.500"
      d={`M${-o * t} ${-o}L${o * t} ${-o}L${n * t} ${-n}L${-n * t} ${-n}Z`} />
  );
};

const CompassRose = () => (
  <Compass width="84" height="92" viewBox="0 0 84 92">
    <g transform="translate(41 46)">
      {[0, 1, 2, 3, 4, 5, 6, 7].map(segment)}
      <path d="M-13-17H13L17-13V13L13 17H-13L-17 13V-13Z" fill="#c3c7c3" />
      <path d="M-17-13L-13-17H-9L-17-9ZM17-13L13-17H9L17-9ZM-17 13L-13 17H-9L-17 9ZM17 13L13 17H9L17 9Z" fill="#fff" />
      <rect x="-11" y="-12" width="22" height="24" fill="#9b9f9b" />
      <g fontFamily="'Noto Sans CJK SC', sans-serif" fontSize="12" fill="#d8d8d8" textAnchor="middle">
        <text x="0" y="-26">北</text>
        <text x="-32" y="5">西</text>
        <text x="32" y="5">东</text>
        <text x="0" y="38">南</text>
        <text x="0" y="7" fontSize="18" fontWeight="300" fill="#6a6e6a">上</text>
      </g>
    </g>
  </Compass>
);

const FloorPlan = () => (
  <Plan width="640" height="440" viewBox="0 0 640 440" fill="none">
    <g stroke="#8f9296">
      <path d="M424.500 70.500H198.500V396.500H601.500V70.500H459.500" />
      <path d="M424.500 86.500H214.500V380.500H585.500V86.500H459.500" />
    </g>
    <g stroke={CYAN}>
      <path d="M423.500 68.500h2v19h-2z" />
      <path d="M457.500 68.500h2v19h-2z" fill="#0c8a90" />
      <path d="M456.500 35.500h2v33h-2z" />
      <path d="M425.500 68.500A33 33 0 0 1 458.500 35.500" strokeDasharray="9 4" />
      <path d="M453.500 44.500v-4h8v4M458 41v-3" strokeWidth="1.500" />
    </g>
    <g fill="#c4c6c8" fontSize="15" fontFamily="Lato, 'Liberation Sans', sans-serif" fontWeight="300">
      <text x="408" y="105">FM</text>
      <text x="431" y="105" fontSize="9" fontFamily="'Noto Sans CJK SC', sans-serif">甲</text>
      <text x="440" y="105">0835</text>
    </g>
  </Plan>
);

const Ucs = () => (
  <UcsMark width="160" height="82" viewBox="0 0 160 82" fill="none" stroke="#a9abae">
    <path d="M17.500 21V63M21 65.500H62M13.500 61.500h8v8h-8z" />
    <path d="M17 5l5 6 5-6M22 11v6M67 56l11 10M78 56l-11 10" />
    <path d="M120.500 54v28M92 81.500h56" stroke="#f2f2f2" />
  </UcsMark>
);

const DoorPlan = () => (
  <svg width="78" height="62" viewBox="0 0 78 62" fill="none" stroke="#e8e800">
    <path d="M3 44h10M3 55h10M64 44h12M64 55h12" stroke="#a9a9a9" />
    <path d="M12.500 43.500h3v12h-3zM62.500 43.500h2v12h-2zM45 46.500h16v7H45z" />
    <path d="M15 42C18 20 33 6 58 6" strokeDasharray="10 5" />
    <path d="M58.500 6v47" strokeWidth="2" />
    <path d="M54 15v-4h9v4" strokeWidth="1.500" />
    <circle cx="58" cy="50" r="2" />
  </svg>
);

const DoorElevation = () => (
  <svg width="76" height="62" viewBox="0 0 76 62" fill="none" stroke="#b8705f">
    <path d="M24.500 3.500h29v55h-29z" />
    <path d="M26.500 5.500h25v53h-25z" stroke="#8a5449" />
    <path d="M29.500 7.500h19v35h-19zM29.500 45.500h19v10h-19z" stroke="#ef9d86" />
    <path d="M27 30v3" stroke="#fff" />
  </svg>
);

/* ---------- composed views ---------- */

const Tool = ({ name, w, h, on, size }: { name: string; w?: number; h?: number; on?: boolean; size?: number }) => (
  <ToolButton $w={w} $h={h} $on={on} aria-label={name}>
    <Icon name={name} size={size} />
  </ToolButton>
);

const Field = ({ id, label, value, disabled }: { id: string; label: string; value: string; disabled?: boolean }) => (
  <>
    <FieldLabel htmlFor={id}>{label}</FieldLabel>
    <SelectCell>
      <FieldSelect id={id} defaultValue={value} disabled={disabled}>
        <option>{value}</option>
      </FieldSelect>
      <Icon name="chevron" size={8} />
    </SelectCell>
  </>
);

const DoorDialog = () => (
  <Dialog aria-label="门">
    <DialogHead>
      <span>门</span>
      <Tool name="close" w={14} size={9} />
    </DialogHead>
    <DialogBody>
      <Preview><DoorPlan /></Preview>
      <FieldColumn $label={27}>
        <Field id="code" label="编号：" value="自动编号" />
        <Field id="kind" label="类型：" value="甲级防火门" />
        <Field id="width" label="门宽：" value="850" />
        <Field id="height" label="门高：" value="3500" />
      </FieldColumn>
      <FieldColumn $label={37}>
        <Field id="sill" label="门槛高：" value="0" />
        <FieldLabel htmlFor="count" $accent>数　量：</FieldLabel>
        <Spinner>
          <FieldInput id="count" defaultValue="1" />
          <SpinButtons>
            <button aria-label="增加"><Icon name="caret" size={5} /></button>
            <button aria-label="减少"><Icon name="caret" size={5} /></button>
          </SpinButtons>
        </Spinner>
        <Field id="distance" label="距　离：" value="300" disabled />
        <LookupButton>查　表</LookupButton>
      </FieldColumn>
      <span style={{ width: 6 }} />
      <Preview><DoorElevation /></Preview>
    </DialogBody>
    <DialogTools>
      {insertTools.map((n, i) => (
        <DialogTool key={n} $w={16} $lit={i === 0} aria-label={n}><Icon name={n} size={13} /></DialogTool>
      ))}
      <Divider />
      {["dReplace", "dPick"].map((n) => (
        <DialogTool key={n} $w={17} aria-label={n}><Icon name={n} size={13} /></DialogTool>
      ))}
      <Divider />
      {shapeTools.map((n, i) => (
        <DialogTool key={n} $w={16} $lit={i === 0} aria-label={n}><Icon name={n} size={13} /></DialogTool>
      ))}
    </DialogTools>
  </Dialog>
);

const CategoryRow = ({ text, open }: { text: string; open?: boolean }) => (
  <Category>
    <Caption>{text}</Caption>
    <CategoryMark style={open ? { transform: "rotate(180deg)" } : undefined}>
      <Icon name="caret" size={4} />
    </CategoryMark>
  </Category>
);

export default function App() {
  return (
    <>
      <GlobalStyle />
      <Window>
        <Header>
          <LogoButton aria-label="浩辰CAD"><Icon name="logo" size={17} /></LogoButton>
          <TitleRow>
            <QuickBar>
              <QuickPill>
                {["file", "folder", "save", "saveAs", "dwg"].map((n) => <Tool key={n} name={n} w={15} h={12} size={12} />)}
                <Workspace aria-label="工作空间" defaultValue="传统界面"><option>传统界面</option></Workspace>
                <Icon name="caret" size={4} />
                <Tool name="undo" w={20} h={12} size={12} />
                <Icon name="caret" size={4} />
                <Tool name="printBlue" w={15} h={12} size={12} />
                <Tool name="layers" w={15} h={12} size={12} />
              </QuickPill>
              <Tool name="caret" w={16} h={12} size={5} />
            </QuickBar>
            <Title>浩辰CAD建筑2025 - [Drawing1.dwg]</Title>
            <WindowControls>
              <Tool name="min" h={12} size={8} />
              <Tool name="max" h={12} size={9} />
              <Tool name="close" h={12} size={9} />
            </WindowControls>
          </TitleRow>
          <MenuRow>
            {menus.map(([name, key]) => (
              <MenuItem key={name}>
                {name}
                {key && <AccessKey>(<u>{key}</u>)</AccessKey>}
              </MenuItem>
            ))}
            <MenuRight>
              <span>外观</span>
              <Icon name="caret" size={4} />
              <Tool name="minBar" w={14} h={12} size={7} />
              <Tool name="restore" w={14} h={12} size={8} />
              <Tool name="closeBold" w={12} h={12} size={8} />
            </MenuRight>
          </MenuRow>
        </Header>

        <ToolRow>
          <ToolGroup>
            {mainTools.map((group) => (
              <React.Fragment key={group}>
                {group !== mainTools[0] && <Divider />}
                {group.split(" ").map((n, i) => (
                  <Tool key={i} name={n} w={n === "caret" ? 12 : 17} size={n === "caret" ? 4 : 14} />
                ))}
              </React.Fragment>
            ))}
            <Grip />
            <Tool name="textStyle" />
            <Combo label="文字样式" value="Standard" w={106} lead={<ComboPad $w={15} />} />
            <Tool name="dimStyle" w={18} />
            <Combo label="标注样式" value="STANDARD" w={106} lead={<ComboPad $w={15} />} />
            <Tool name="tableStyle" w={19} />
            <Combo label="表格样式" value="Standard" w={106} lead={<ComboPad $w={15} />} />
            <Tool name="leaderStyle" w={19} />
            <Combo label="引线样式" value="Standard" w={106} lead={<ComboPad $w={15} />} />
          </ToolGroup>
        </ToolRow>
        <ToolRow>
          <ToolGroup>
            <Tool name="layersBlue" />
            <Combo label="图层" value="0" w={215} muted
              lead={<>{["bulb", "sun", "lock", "swatch"].map((n) => <Tool key={n} name={n} w={12} h={12} size={11} />)}</>} />
            {["layersTop", "layers", "layersBlue", "layerPage"].map((n) => <Tool key={n} name={n} />)}
            <Grip />
            <Combo label="颜色" value="ByLayer" w={108} lead={<Icon name="swatch" size={11} />} />
            <Combo label="线型" value="ByLayer" w={128} lead={<ComboRule $w={53} />} />
            <Combo label="线宽" value="ByLayer" w={107} lead={<ComboRule $w={24} />} />
            <Combo label="打印样式" value="ByColor" w={107} lead={<ComboPad $w={14} />} />
          </ToolGroup>
        </ToolRow>

        <Body>
          <Palette>
            <PaletteHead>工具箱</PaletteHead>
            <Stack>
              {topCategories.map((t, i) => <CategoryRow key={t} text={t} open={i === 3} />)}
            </Stack>
            {toolGroups.map((group, i) => (
              <ToolList key={i}>
                {group.map(([icon, text]) => (
                  <ToolEntry key={text}>
                    {icon ? <Icon name={icon} size={12} /> : <Blank />}
                    <Caption>{text}</Caption>
                    {!icon && <CategoryMark style={{ transform: "rotate(-90deg)" }}><Icon name="caret" size={4} /></CategoryMark>}
                  </ToolEntry>
                ))}
              </ToolList>
            ))}
            <Stack>
              {lowerCategories.map((t) => <CategoryRow key={t} text={t} />)}
            </Stack>
            <Modules>
              {modules.map(([icon, text], i) => (
                <ModuleButton key={text} $on={i === 0}>
                  <Icon name={icon} size={15} />
                  <Caption>{text}</Caption>
                </ModuleButton>
              ))}
            </Modules>
          </Palette>

          <Work>
            <WorkRow>
              <SideBar $w={19}>
                <SideGroup>
                  <Grip $wide />
                  {drawTools.map((n) => <Tool key={n} name={n} w={16} size={12} />)}
                </SideGroup>
              </SideBar>
              <Document>
                <DocTabs>
                  <DocTab>Drawing1<Icon name="close" size={6} /></DocTab>
                </DocTabs>
                <Canvas>
                  <FloorPlan />
                  <Ucs />
                  <CompassRose />
                  <DoorDialog />
                </Canvas>
              </Document>
              <SideBar $w={16}>
                <SideGroup>
                  <Grip $wide />
                  {modifyTools.map((n) => <Tool key={n} name={n} w={15} size={12} />)}
                  <Grip $wide />
                  {orderTools.map((n) => <Tool key={n} name={n} w={15} size={12} />)}
                  <SideRule />
                  <Tool name="abc" w={15} size={12} />
                  <Tool name="dimFront" w={15} size={12} />
                </SideGroup>
              </SideBar>
            </WorkRow>
            <CommandPane>
              <CommandSide>
                <Grip $wide />
                <Tool name="close" w={14} h={14} size={10} />
                <Tool name="pencil" w={14} h={14} size={11} />
              </CommandSide>
              <CommandMain>
                <History>
                  <HistoryLine>点取门窗插入位置(SHIFT键-左右开)&lt;退出&gt;:</HistoryLine>
                  <HistoryLine>门窗高度方向超出墙体!</HistoryLine>
                </History>
                <PromptRow>
                  <PromptInput aria-label="命令" defaultValue="与图中已有同样编号的门窗参数不一致!请重新输入编号<FM甲0835>:" />
                  <HScroll>
                    <ScrollButton $turn={90} aria-label="向左"><Icon name="chevron" size={8} /></ScrollButton>
                    <HThumb />
                    <ScrollButton $turn={-90} aria-label="向右"><Icon name="chevron" size={8} /></ScrollButton>
                  </HScroll>
                </PromptRow>
              </CommandMain>
              <VScroll>
                <ScrollButton $turn={180} aria-label="向上"><Icon name="chevron" size={8} /></ScrollButton>
                <ScrollButton $turn={0} aria-label="向下"><Icon name="chevron" size={8} /></ScrollButton>
              </VScroll>
            </CommandPane>
            <Callout />
            <CalloutArrow width="224" height="74" viewBox="0 0 224 74">
              <path d="M222 4L22 67" stroke="#e0524f" strokeWidth="1.500" />
              <path d="M9 71L22 62L24 71Z" fill="#f0595b" />
            </CalloutArrow>
          </Work>
        </Body>

        <LayoutTabs>
          <Tool name="burger" w={14} />
          <span style={{ width: 8 }} />
          <LayoutTab $on>模型</LayoutTab>
          <LayoutTab>布局1</LayoutTab>
          <LayoutRule />
          <LayoutTab>布局2</LayoutTab>
          <LayoutRule />
          <Tool name="plus" w={24} size={12} />
        </LayoutTabs>
        <StatusBar>
          <StatusText>
            <span>比例 1:100</span>
            <Icon name="caret" size={4} />
            <span>单位:mm</span>
            <Coordinates>22248, 8143, 0</Coordinates>
          </StatusText>
          {statusTools.map((n) => <Tool key={n} name={n.replace("*", "")} on={n.endsWith("*")} w={15} h={14} size={13} />)}
          <span>1:1</span>
          <Tool name="caret" w={8} size={4} />
          <Tool name="annoDot" w={15} size={13} />
          <Tool name="annoX" w={15} size={13} />
          <Tool name="cabinet" w={15} size={13} />
          <StatusTray>
            <Tool name="tray" w={15} h={14} size={13} on />
            <Tool name="isolate" w={14} h={14} size={11} />
          </StatusTray>
        </StatusBar>
        <ImeBar>
          <ImeButton aria-label="输入法"><Icon name="sogou" size={14} /></ImeButton>
          <Divider />
          <ImeButton>英</ImeButton>
          <ImeButton>•,</ImeButton>
          {["mic", "keyboard", "shirt", "apps", "fox"].map((n) => (
            <ImeButton key={n} aria-label={n}><Icon name={n} size={13} /></ImeButton>
          ))}
        </ImeBar>
      </Window>
    </>
  );
}
